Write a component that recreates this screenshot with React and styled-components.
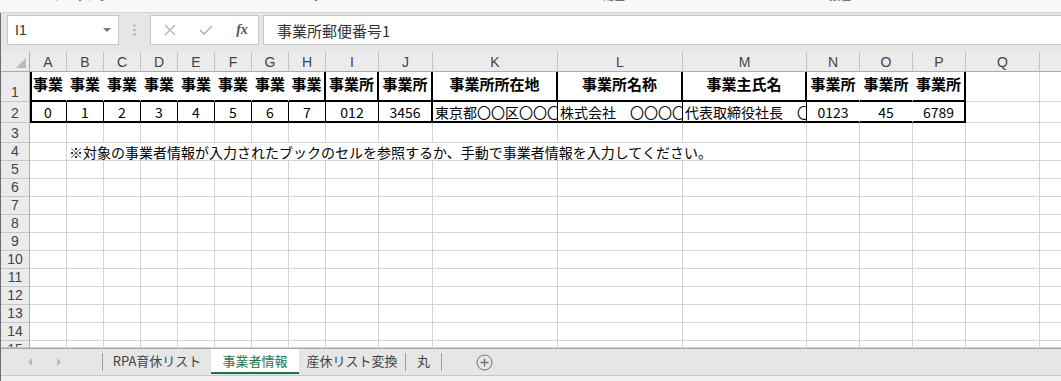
import styled, { createGlobalStyle } from 'styled-components';

const JP = `"Noto Sans CJK JP", "Liberation Sans", sans-serif`;
const SANS = `"Liberation Sans", "Noto Sans", sans-serif`;

const GlobalStyle = createGlobalStyle`
  html, body {
    margin: 0;
    padding: 0;
    background: #fff;
    overflow: hidden;
  }
  body {
    font-family: ${JP};
  }
  * {
    box-sizing: border-box;
  }
`;

const Window = styled.div`
  width: 1061px;
  height: 381px;
  overflow: hidden;
  display: flex;
  flex-direction: column;
  background: #fff;
`;

const RibbonStrip = styled.div`
  height: 13px;
  flex: none;
  display: flex;
  overflow: hidden;
  background: #f8f8f8;
  border-bottom: 1px solid #d4d4d4;
`;

const RibbonGroup = styled.div`
  width: ${(p) => p.$w}px;
  flex: none;
  margin-top: -11px;
  text-align: center;
  font-size: 11px;
  line-height: 13px;
  color: #555;
  white-space: nowrap;
`;

const Body = styled.div`
  flex: 1;
  display: flex;
  flex-direction: column;
  border-left: 1px solid #6e6e6e;
  min-height: 0;
`;

const FormulaBar = styled.div`
  height: 39px;
  flex: none;
  display: flex;
  align-items: flex-start;
  padding-top: 2px;
  background: #e6e6e6;
`;

const NameBox = styled.div`
  width: 112px;
  height: 30px;
  margin-left: 6px;
  display: flex;
  align-items: center;
  padding-left: 7px;
  background: #fff;
  border: 1px solid #c8c8c8;
  font-family: ${SANS};
  font-size: 14px;
  color: #333;
`;

const Caret = styled.span`
  margin-left: auto;
  margin-right: 7px;
  border-left: 4px solid transparent;
  border-right: 4px solid transparent;
  border-top: 4px solid #7a7a7a;
`;

const Grip = styled.div`
  width: 31px;
  height: 30px;
  display: flex;
  align-items: center;
  justify-content: center;
`;

const FxBox = styled.div`
  width: 109px;
  height: 30px;
  display: flex;
  align-items: center;
  gap: 20px;
  padding-left: 11px;
  background: #fff;
  border: 1px solid #c8c8c8;
`;

const FxIcon = styled.span`
  width: 16px;
  display: flex;
  justify-content: center;
  font-family: "Liberation Serif", serif;
  font-style: italic;
  font-weight: 700;
  font-size: 14px;
  color: #555;
`;

const FormulaInput = styled.div`
  flex: 1;
  height: 30px;
  margin-left: 4px;
  display: flex;
  align-items: center;
  padding-left: 13px;
  background: #fff;
  border: 1px solid #c8c8c8;
  border-right: none;
  font-size: 15px;
  color: #333;
`;

const Sheet = styled.div`
  flex: none;
  display: grid;
  grid-template-columns: 29px repeat(8, 37px) 53px 54px 125px 125px 124px 53px 53px 53px 74px 74px;
  grid-template-rows: 20px 30px 21px 20px repeat(11, 18px) 7px;
  overflow: hidden;
  width: 1060px;
`;

const Corner = styled.div`
  background: #ebebeb;
  border-right: 1px solid #ababab;
  border-bottom: 1px solid #ababab;
  display: flex;
  align-items: flex-end;
  justify-content: flex-end;
  padding: 0 3px 3px 0;
`;

const ColHead = styled.div`
  background: #ebebeb;
  border-right: 1px solid #c2c2c2;
  border-bottom: 1px solid #ababab;
  display: flex;
  align-items: center;
  justify-content: center;
  font-family: ${SANS};
  font-size: 14px;
  color: #444;
`;

const RowHead = styled.div`
  background: #ebebeb;
  border-right: 1px solid #ababab;
  border-bottom: 1px solid #c6c6c6;
  display: flex;
  align-items: ${(p) => (p.$top ? 'flex-start' : 'flex-end')};
  justify-content: center;
  overflow: hidden;
  font-family: ${SANS};
  font-size: 14px;
  line-height: 17px;
  color: #444;
`;

const borderCss = (kind) =>
  ({
    grid: '1px solid #d4d4d4',
    thin: '1px solid #000',
    thick: '2px solid #000',
    none: '1px solid #fff',
  })[kind];

const Cell = styled.div`
  grid-column: span ${(p) => p.$span || 1};
  min-width: 0;
  background: #fff;
  border-right: ${(p) => borderCss(p.$right || 'grid')};
  border-bottom: ${(p) => borderCss(p.$bottom || 'grid')};
  box-shadow: ${(p) => (p.$thickLeft ? 'inset 2px 0 0 #000' : 'none')};
  display: flex;
  align-items: ${(p) => (p.$top ? 'flex-start' : 'center')};
  justify-content: ${(p) => (p.$center ? 'center' : 'flex-start')};
  padding: ${(p) => (p.$top ? '3px 2px 0' : '0 2px')};
  overflow: hidden;
  white-space: nowrap;
  font-family: ${JP};
  font-size: ${(p) => p.$size || 14}px;
  font-weight: ${(p) => (p.$bold ? 700 : 400)};
  line-height: 18px;
  color: #000;
`;

const TabBar = styled.div`
  height: 28px;
  flex: none;
  display: flex;
  align-items: center;
  background: #e6e6e6;
  border-top: 1px solid #a8a8a8;
  border-bottom: 1px solid #c8c8c8;
`;

const NavArea = styled.div`
  width: 101px;
  height: 100%;
  display: flex;
  align-items: center;
  gap: 25px;
  padding-left: 27px;
`;

const Arrow = styled.span`
  border-top: 4px solid transparent;
  border-bottom: 4px solid transparent;
  ${(p) => (p.$dir === 'left' ? 'border-right: 4px solid #b8b8b8;' : 'border-left: 4px solid #b8b8b8;')}
`;

const Separator = styled.div`
  width: 1px;
  height: 18px;
  background: #9c9c9c;
`;

const Tab = styled.div`
  width: ${(p) => p.$w}px;
  height: 25px;
  align-self: flex-start;
  display: flex;
  align-items: center;
  justify-content: center;
  font-size: 13px;
  white-space: nowrap;
  color: ${(p) => (p.$active ? '#217346' : '#444')};
  background: ${(p) => (p.$active ? '#fff' : 'transparent')};
  border-bottom: 2px solid ${(p) => (p.$active ? '#217346' : 'transparent')};
`;

const AddSheet = styled.div`
  margin-left: 34px;
  display: flex;
  align-items: center;
`;

const BottomStrip = styled.div`
  height: 5px;
  flex: none;
  background: #f0f0f0;
`;

const COLS = ['A', 'B', 'C', 'D', 'E', 'F', 'G', 'H', 'I', 'J', 'K', 'L', 'M', 'N', 'O', 'P', 'Q', 'R'];

const row1 = [
  ['事業', 'none'], ['事業', 'none'], ['事業', 'none'], ['事業', 'none'],
  ['事業', 'none'], ['事業', 'none'], ['事業', 'none'], ['事業', 'thick'],
  ['事業所', 'thick'], ['事業所', 'thick'], ['事業所所在地', 'thick'], ['事業所名称', 'thick'],
  ['事業主氏名', 'thick'], ['事業所', 'none'], ['事業所', 'none'], ['事業所', 'thick'],
];

const row2 = [
  ['0', 'thin', true], ['1', 'thin', true], ['2', 'thin', true], ['3', 'thin', true],
  ['4', 'thin', true], ['5', 'thin', true], ['6', 'thin', true], ['7', 'thin', true],
  ['012', 'thin', true], ['3456', 'thick', true], ['東京都〇〇区〇〇〇', 'thin', false],
  ['株式会社　〇〇〇〇', 'thin', false], ['代表取締役社長　〇', 'thin', false],
  ['0123', 'none', true], ['45', 'none', true], ['6789', 'thick', true],
];

const GridRow = ({ n, top }) => (
  <>
    <RowHead $top={top}>{n}</RowHead>
    {COLS.map((c) => (
      <Cell key={c} />
    ))}
  </>
);

const XIcon = () => (
  <svg width="12" height="12" viewBox="0 0 12 12">
    <path d="M1 1 L11 11 M11 1 L1 11" stroke="#b4b4b4" strokeWidth="1.4" fill="none" />
  </svg>
);

const CheckIcon = () => (
  <svg width="14" height="12" viewBox="0 0 14 12">
    <path d="M1 6 L5 10 L13 2" stroke="#b4b4b4" strokeWidth="1.6" fill="none" />
  </svg>
);

const App = () => {
  return (
    <Window>
      <GlobalStyle />
      <RibbonStrip>
        <RibbonGroup $w={184}>クリップボード</RibbonGroup>
        <RibbonGroup $w={274}>フォント</RibbonGroup>
        <RibbonGroup $w={312}>配置</RibbonGroup>
        <RibbonGroup $w={140}>数値</RibbonGroup>
      </RibbonStrip>
      <Body>
        <FormulaBar>
          <NameBox>
            I1
            <Caret />
          </NameBox>
          <Grip>
            <svg width="3" height="12" viewBox="0 0 3 12">
              <circle cx="1.5" cy="1.5" r="1.2" fill="#b0b0b0" />
              <circle cx="1.5" cy="6" r="1.2" fill="#b0b0b0" />
              <circle cx="1.5" cy="10.5" r="1.2" fill="#b0b0b0" />
            </svg>
          </Grip>
          <FxBox>
            <FxIcon>
              <XIcon />
            </FxIcon>
            <FxIcon>
              <CheckIcon />
            </FxIcon>
            <FxIcon>fx</FxIcon>
          </FxBox>
          <FormulaInput>事業所郵便番号1</FormulaInput>
        </FormulaBar>

        <Sheet>
          <Corner>
            <svg width="10" height="10" viewBox="0 0 10 10">
              <polygon points="10,0 10,10 0,10" fill="#bcbcbc" />
            </svg>
          </Corner>
          {COLS.map((c) => (
            <ColHead key={c}>{c}</ColHead>
          ))}

          <RowHead>1</RowHead>
          {COLS.map((c, i) =>
            i < 16 ? (
              <Cell key={c} $top $center $bold $size={15} $right={row1[i][1]} $bottom="thick" $thickLeft={i === 0}>
                {row1[i][0]}
              </Cell>
            ) : (
              <Cell key={c} />
            )
          )}

          <RowHead>2</RowHead>
          {COLS.map((c, i) =>
            i < 16 ? (
              <Cell key={c} $center={row2[i][2]} $right={row2[i][1]} $bottom="thick" $thickLeft={i === 0}>
                {row2[i][0]}
              </Cell>
            ) : (
              <Cell key={c} />
            )
          )}

          <GridRow n={3} />

          <RowHead>4</RowHead>
          <Cell />
          <Cell $span={12} $size={14}>
            ※対象の事業者情報が入力されたブックのセルを参照するか、手動で事業者情報を入力してください。
          </Cell>
          {COLS.slice(13).map((c) => (
            <Cell key={c} />
          ))}

          {[5, 6, 7, 8, 9, 10, 11, 12, 13, 14].map((n) => (
            <GridRow key={n} n={n} />
          ))}
          <GridRow n={15} top />
        </Sheet>

        <TabBar>
          <NavArea>
            <Arrow $dir="left" />
            <Arrow $dir="right" />
          </NavArea>
          <Separator />
          <Tab $w={108}>RPA育休リスト</Tab>
          <Tab $w={88} $active>
            事業者情報
          </Tab>
          <Tab $w={106}>産休リスト変換</Tab>
          <Separator />
          <Tab $w={35}>丸</Tab>
          <Separator />
          <AddSheet>
            <svg width="17" height="17" viewBox="0 0 17 17">
              <circle cx="8.5" cy="8.5" r="7.5" stroke="#6f6f6f" strokeWidth="1" fill="none" />
              <path d="M8.5 4.5 V12.5 M4.5 8.5 H12.5" stroke="#6f6f6f" strokeWidth="1.3" />
            </svg>
          </AddSheet>
        </TabBar>
        <BottomStrip />
      </Body>
    </Window>
  );
};

export default App;
